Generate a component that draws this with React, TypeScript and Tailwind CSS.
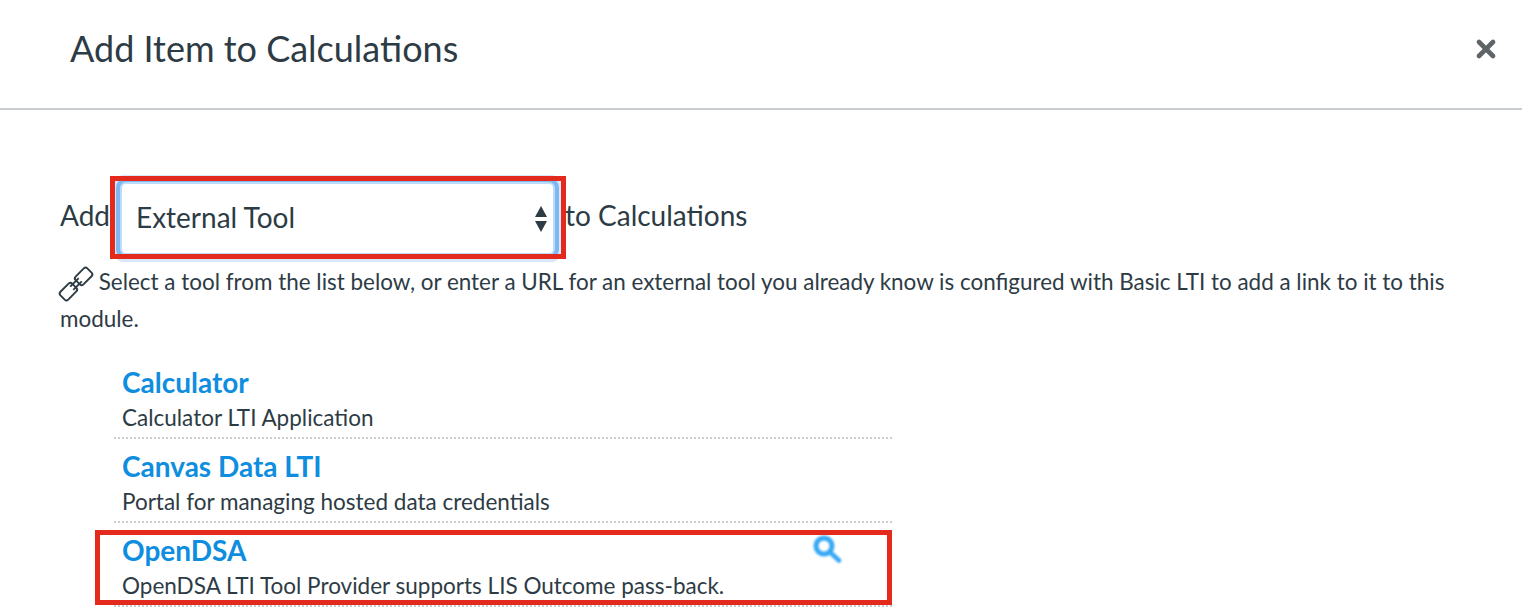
import React from "react";
import { X } from "lucide-react";

const tools = [
  { name: "Calculator", description: "Calculator LTI Application" },
  { name: "Canvas Data LTI", description: "Portal for managing hosted data credentials" },
  { name: "OpenDSA", description: "OpenDSA LTI Tool Provider supports LIS Outcome pass-back.", selected: true },
];

const LinkIcon = () => (
  <svg viewBox="0 0 32 34" className="mr-[1px] inline-block h-[34px] w-[32px] overflow-visible align-[-11px]" fill="none" stroke="#2d3b45" strokeWidth="1.900" strokeLinejoin="round">
    <g transform="rotate(-45 16 17)">
      <rect x="-3" y="11.500" width="16.500" height="11" rx="2.500" />
      <rect x="18.500" y="11.500" width="16.500" height="11" rx="2.500" />
      <path d="M10 14.800 H22 M10 19.200 H22" />
    </g>
  </svg>
);

const SearchIcon = () => (
  <svg viewBox="0 0 30 30" className="mt-[2px] h-[30px] w-[30px] blur-[0.8px]" fill="none" stroke="#35a8f5" strokeLinecap="round">
    <circle cx="11" cy="12" r="8" strokeWidth="5" />
    <path d="M19 20 L26 26.500" strokeWidth="4.500" />
  </svg>
);

export default function App() {
  return (
    <div className="h-[616px] w-[1522px] overflow-hidden bg-white font-['Lato','Open_Sans',sans-serif] text-[#2d3b45]">
      <header className="flex h-[110px] items-start justify-between border-b-2 border-[#c7cdd1] pl-[70px] pr-[22px] pt-[25px]">
        <h1 className="text-[36px] leading-[46px]">Add Item to Calculations</h1>
        <X className="mt-[10px] h-[28px] w-[28px] text-[#5f6467]" strokeWidth={4} />
      </header>

      <main className="pl-[60px] pr-[60px] pt-[74px]">
        <div className="flex items-center text-[28px] leading-[36px]">
          <span className="mb-[8px] w-[62px]">Add</span>
          <div className="relative h-[69px] w-[431px] rounded-[4px] bg-white shadow-[0_0_0_2px_#bcdcfb,0_0_0_6px_#7db8f0,0_0_0_9px_#d6e8fa]">
            <div className="flex h-full items-center justify-between pb-[4px] pl-[14px] pr-[6px]">
              <span>External Tool</span>
              <svg viewBox="0 0 12 26" className="mt-[4px] h-[26px] w-[12px]" fill="#2d3b45">
                <path d="M6 0 L12 11 L0 11 Z" />
                <path d="M0 15 L12 15 L6 26 Z" />
              </svg>
            </div>
            <div className="absolute -bottom-[6px] -left-[12px] -right-[13px] -top-[8px] border-[5px] border-[#e32a1c]" />
          </div>
          <span className="mb-[8px] ml-[12px]">to Calculations</span>
        </div>

        <p className="mt-[11px] text-[22.450px] leading-[35px]">
          <LinkIcon /> Select a tool from the list below, or enter a URL for an external tool you already know is configured with Basic LTI to add a link to it to this module.
        </p>

        <ul className="ml-[54px] mt-[19px] w-[778px]">
          {tools.map((tool) => (
            <li key={tool.name} className="relative h-[84px] border-b-2 border-dotted border-[#c7cdd1] pl-[8px] pt-[9px]">
              <div className="flex items-start justify-between pr-[49px]">
                <a className="text-[28px] font-bold leading-[36px] text-[#0f8ee0]">{tool.name}</a>
                {tool.selected && <SearchIcon />}
              </div>
              <p className="text-[22.500px] leading-[36px]">{tool.description}</p>
              {tool.selected && (
                <div className="absolute -left-[19px] bottom-[0px] right-[0px] top-[7px] border-[5px] border-[#e32a1c]" />
              )}
            </li>
          ))}
        </ul>
      </main>
    </div>
  );
}
